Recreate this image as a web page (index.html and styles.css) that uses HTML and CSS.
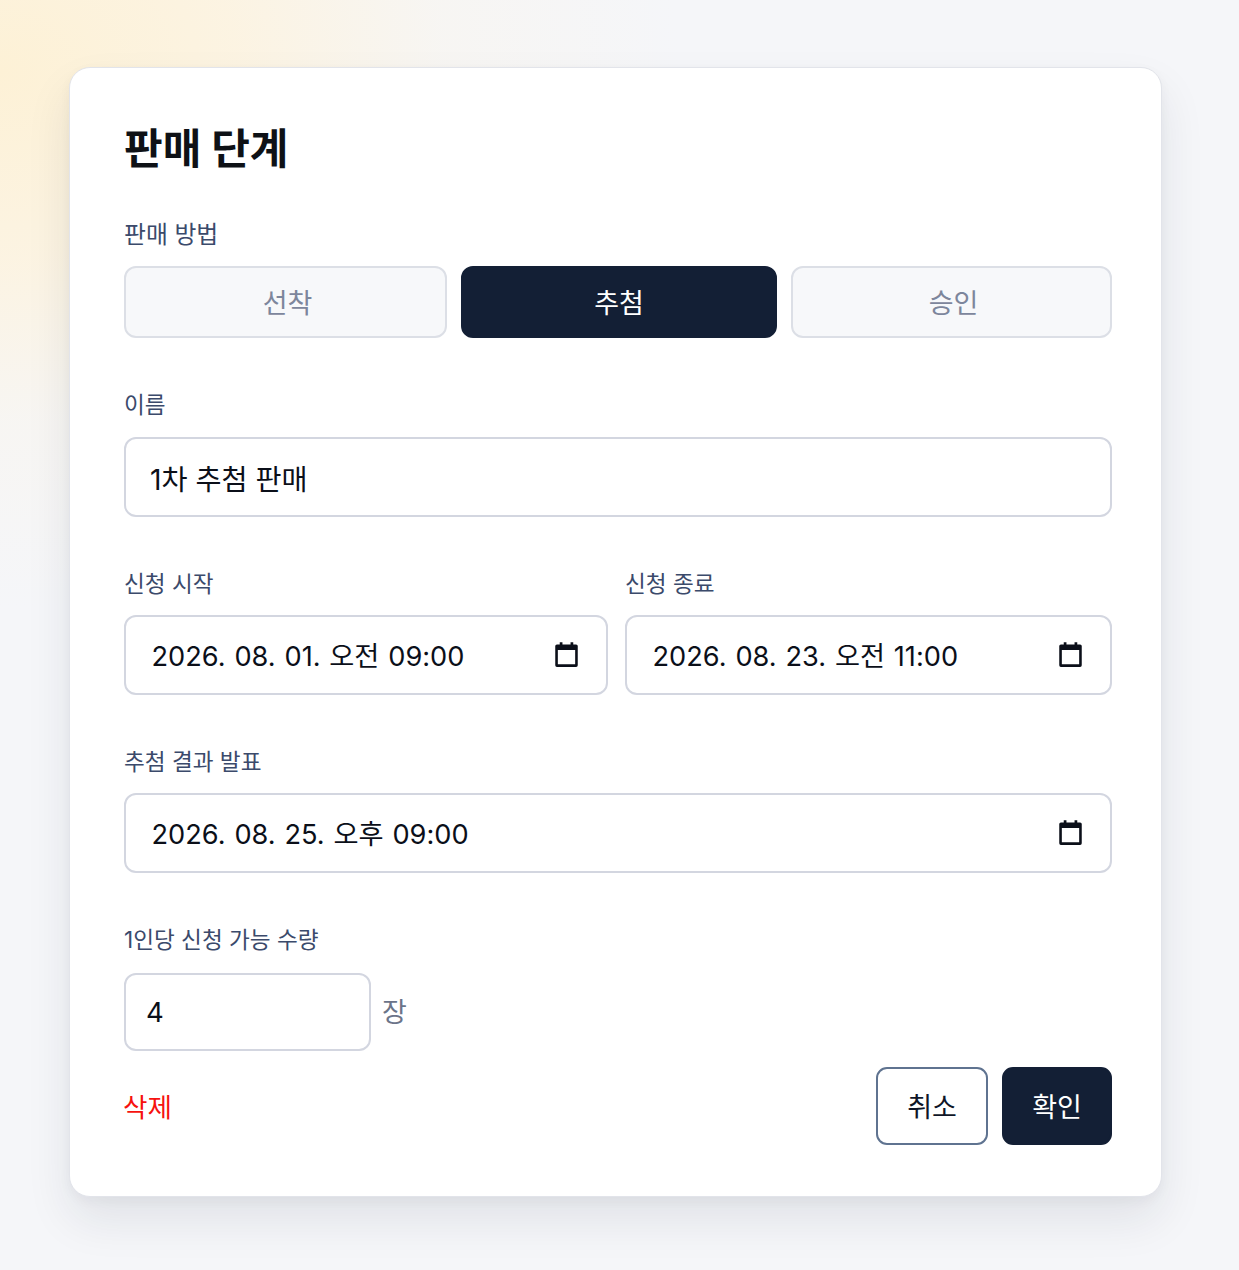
FILE: index.html
```html
<!DOCTYPE html>
<html lang="ko">
<head>
<meta charset="utf-8">
<title>판매 단계</title>
<link rel="stylesheet" href="styles.css">
</head>
<body>
<main class="card">
  <h1 class="title">판매 단계</h1>

  <section class="field method">
    <div class="label method-label">판매 방법</div>
    <div class="segments">
      <button class="segment">선착</button>
      <button class="segment active">추첨</button>
      <button class="segment">승인</button>
    </div>
  </section>

  <section class="field name">
    <div class="label">이름</div>
    <div class="input name-input">1차 추첨 판매</div>
  </section>

  <section class="date-row">
    <div class="field">
      <div class="label">신청 시작</div>
      <div class="input date-input"><span>2026. 08. 01. 오전 09:00</span>
        <svg class="cal" viewBox="0 0 24 24"><path d="M6 1h2.4v3H6zM15.6 1H18v3h-2.4z"/><path fill-rule="evenodd" d="M3.5 3h17A1.5 1.5 0 0 1 22 4.500v17a1.500 1.500 0 0 1-1.500 1.500h-17A1.500 1.500 0 0 1 2 21.500v-17A1.500 1.500 0 0 1 3.500 3zM4.300 8v12.700h15.400V8z"/></svg>
      </div>
    </div>
    <div class="field">
      <div class="label">신청 종료</div>
      <div class="input date-input"><span>2026. 08. 23. 오전 11:00</span>
        <svg class="cal" viewBox="0 0 24 24"><path d="M6 1h2.4v3H6zM15.6 1H18v3h-2.4z"/><path fill-rule="evenodd" d="M3.5 3h17A1.5 1.5 0 0 1 22 4.500v17a1.500 1.500 0 0 1-1.500 1.500h-17A1.500 1.500 0 0 1 2 21.500v-17A1.500 1.500 0 0 1 3.500 3zM4.300 8v12.700h15.400V8z"/></svg>
      </div>
    </div>
  </section>

  <section class="field result">
    <div class="label">추첨 결과 발표</div>
    <div class="input date-input"><span>2026. 08. 25. 오후 09:00</span>
      <svg class="cal" viewBox="0 0 24 24"><path d="M6 1h2.4v3H6zM15.6 1H18v3h-2.4z"/><path fill-rule="evenodd" d="M3.5 3h17A1.5 1.5 0 0 1 22 4.500v17a1.500 1.500 0 0 1-1.500 1.500h-17A1.500 1.500 0 0 1 2 21.500v-17A1.500 1.500 0 0 1 3.500 3zM4.300 8v12.700h15.400V8z"/></svg>
    </div>
  </section>

  <section class="field quantity">
    <div class="label">1인당 신청 가능 수량</div>
    <div class="qty-row">
      <div class="input qty-input">4</div>
      <span class="unit">장</span>
    </div>
  </section>

  <footer class="actions">
    <button class="delete">삭제</button>
    <div class="action-right">
      <button class="btn cancel">취소</button>
      <button class="btn confirm">확인</button>
    </div>
  </footer>
</main>
</body>
</html>
```
FILE: styles.css
```css
* { box-sizing: border-box; }
html, body { margin: 0; height: 100%; }
body {
  width: 1239px;
  height: 1270px;
  overflow: hidden;
  padding: 67px 77px 0 69px;
  background:
    radial-gradient(ellipse 680px 540px at 0 70px, #fdf1d6 0%, rgba(253, 243, 222, .85) 35%, rgba(250, 245, 235, .45) 65%, rgba(245, 246, 250, 0) 100%),
    #f5f6f9;
  font-family: Inter, "Noto Sans CJK KR", sans-serif;
  color: #0b0f19;
}
button { font-family: inherit; cursor: pointer; }
.card {
  width: 1093px;
  height: 1130px;
  padding: 54px 49px 0 54px;
  background: #fff;
  border: 1px solid #e2e4ea;
  border-radius: 21px;
  box-shadow: 0 23px 46px rgba(20, 30, 55, .09), 0 4px 12px rgba(20, 30, 55, .04);
}
.title {
  margin: 0;
  height: 54px;
  font-size: 42px;
  line-height: 54px;
  font-weight: 700;
  color: #0e1116;
}
.label {
  font-size: 22.6px;
  line-height: 34px;
  color: #3b4a6b;
}
.method-label { font-size: 23.8px; }
.field { display: flex; flex-direction: column; }
.method { margin-top: 42px; gap: 14px; }
.segments {
  display: grid;
  grid-template-columns: 323px 316px 321px;
  column-gap: 14px;
}
.segment {
  height: 72px;
  padding: 0 0 2px 4px;
  font-size: 27px;
  color: #7d869c;
  background: #f7f8fa;
  border: 2px solid #dcdfe6;
  border-radius: 12px;
}
.segment.active { padding: 0 0 2px; color: #fff; background: #131f35; border-color: #131f35; }
.name { margin-top: 50px; gap: 15px; }
.input {
  display: flex;
  align-items: center;
  height: 80px;
  background: #fff;
  border: 2px solid #d3d6e0;
  border-radius: 12px;
  color: #0b0f19;
  font-size: 28.3px;
}
.name-input { padding-left: 24px; }
.date-input { justify-content: space-between; padding: 0 26px 2px 25.5px; font-size: 27.2px; word-spacing: 1.2px; }
.cal { width: 27px; height: 27px; flex: none; fill: #0b0f19; }
.date-row {
  display: grid;
  grid-template-columns: 484px 487px;
  column-gap: 17px;
  margin-top: 50px;
}
.date-row .field { gap: 14px; }
.result { margin-top: 50px; gap: 14px; }
.quantity { margin-top: 50px; gap: 16px; }
.qty-row { display: flex; align-items: center; gap: 11px; }
.qty-input { width: 247px; height: 78px; padding-left: 20px; font-size: 27.5px; }
.unit { margin-bottom: 3px; font-size: 27px; color: #6b7489; }
.actions {
  display: flex;
  align-items: center;
  justify-content: space-between;
  margin-top: 16px;
}
.delete {
  padding: 0 0 2px;
  margin-left: -1px;
  background: none;
  border: 0;
  font-size: 26.6px;
  color: #f6120f;
}
.action-right { display: flex; gap: 14px; }
.btn {
  height: 78px;
  padding-bottom: 3px;
  font-size: 27px;
  border-radius: 11px;
}
.cancel { width: 112px; background: #fff; border: 2px solid #5f7390; color: #0f1627; }
.confirm { width: 110px; background: #131f35; border: 2px solid #131f35; color: #fff; }
```
